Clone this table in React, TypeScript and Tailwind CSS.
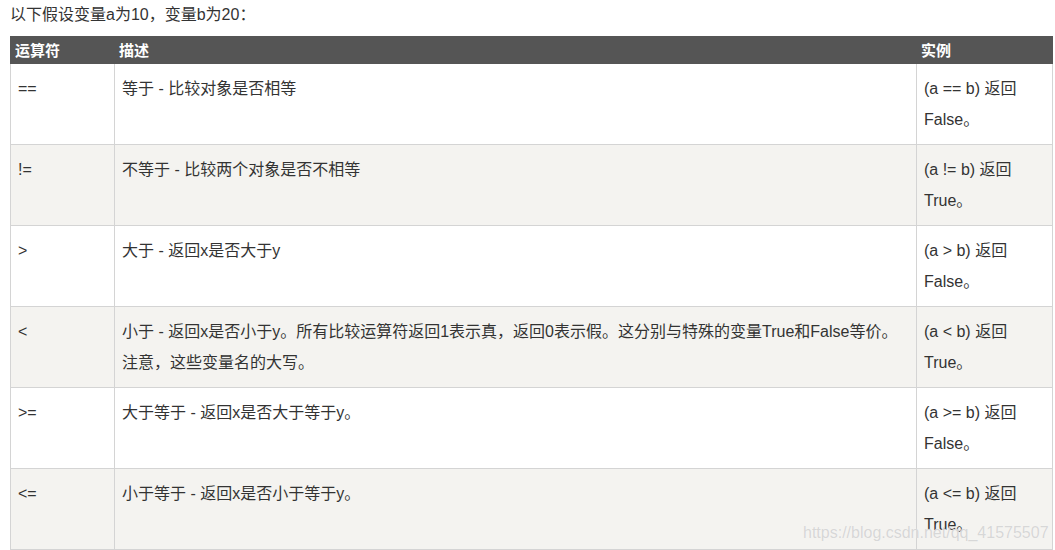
const rows: { op: string; desc: string[]; ex: string[] }[] = [
  { op: '==', desc: ['等于 - 比较对象是否相等'], ex: ['(a == b) 返回', 'False。'] },
  { op: '!=', desc: ['不等于 - 比较两个对象是否不相等'], ex: ['(a != b) 返回', 'True。'] },
  { op: '>', desc: ['大于 - 返回x是否大于y'], ex: ['(a > b) 返回', 'False。'] },
  {
    op: '<',
    desc: [
      '小于 - 返回x是否小于y。所有比较运算符返回1表示真，返回0表示假。这分别与特殊的变量True和False等价。',
      '注意，这些变量名的大写。',
    ],
    ex: ['(a < b) 返回', 'True。'],
  },
  { op: '>=', desc: ['大于等于 - 返回x是否大于等于y。'], ex: ['(a >= b) 返回', 'False。'] },
  { op: '<=', desc: ['小于等于 - 返回x是否小于等于y。'], ex: ['(a <= b) 返回', 'True。'] },
];

export default function App() {
  return (
    <div
      className="relative h-[550px] w-[1055px] overflow-hidden bg-white text-[#333]"
      style={{ fontFamily: '"Liberation Sans", "Noto Sans CJK SC", sans-serif' }}
    >
      <p className="pl-[10px] text-[16px] leading-[30px] h-[36px]">以下假设变量a为10，变量b为20：</p>

      <div className="ml-[10px] w-[1043px]">
        <div className="flex h-[28px] bg-[#555] text-[15px] font-bold leading-[30px] text-white">
          <div className="w-[105px] pl-[5px]">运算符</div>
          <div className="w-[802px] pl-[4px]">描述</div>
          <div className="flex-1 pl-[4px]">实例</div>
        </div>

        {rows.map((r, i) => (
          <div
            key={r.op}
            className={
              'flex h-[81px] border-x border-b border-[#d4d4d4] text-[16px] leading-[31px] ' +
              (i % 2 === 1 ? 'bg-[#f4f3f0]' : 'bg-white')
            }
          >
            <div className="w-[104px] border-r border-[#d4d4d4] px-[7px] py-[9px]">{r.op}</div>
            <div className="w-[802px] border-r border-[#d4d4d4] px-[7px] py-[9px]">
              {r.desc.map((d) => (
                <div key={d} className="whitespace-nowrap">{d}</div>
              ))}
            </div>
            <div className="flex-1 px-[7px] py-[9px]">
              {r.ex.map((e) => (
                <div key={e} className="whitespace-nowrap">{e}</div>
              ))}
            </div>
          </div>
        ))}
      </div>

      <div
        className="absolute left-[803px] top-[521px] text-[16px] leading-[24px] text-[#d2d2d2]/90"
        style={{ fontFamily: '"Liberation Sans", sans-serif', textShadow: '0 0 1px rgba(255,255,255,0.8)' }}
      >
        https://blog.csdn.net/qq_41575507
      </div>
    </div>
  );
}
